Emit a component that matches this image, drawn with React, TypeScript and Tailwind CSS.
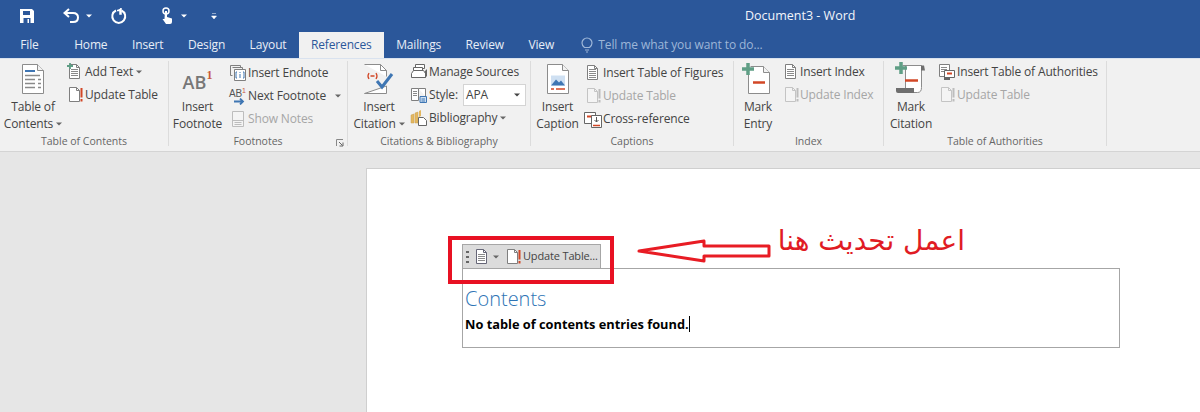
import type { ReactNode } from "react"

const GREY = "#7f7f7f"
const RED = "#d24726"
const GREEN = "#5f9e85"
const BLUE = "#3f76b3"

function Caret({ color = "#666" }: { color?: string }) {
  return (
    <svg width="6" height="4" viewBox="0 0 6 4" className="shrink-0">
      <path d="M0 0.5h6L3 3.5z" fill={color} />
    </svg>
  )
}

function Doc({ stroke = GREY, fill = "#fff", children }: { stroke?: string; fill?: string; children?: ReactNode }) {
  return (
    <>
      <path d="M3.5 1.5h7l3 3v11h-10z" fill={fill} stroke={stroke} />
      <path d="M10.5 1.5v3h3" fill="none" stroke={stroke} />
      {children}
    </>
  )
}

function Small({ children }: { children: ReactNode }) {
  return (
    <svg width="18" height="18" viewBox="0 0 18 18" className="shrink-0">
      {children}
    </svg>
  )
}

function Lines({ x = 5, y = 6, w = 7, n = 4, color = "#8a8a8a" }: { x?: number; y?: number; w?: number; n?: number; color?: string }) {
  return (
    <>
      {Array.from({ length: n }).map((_, i) => (
        <path key={i} d={`M${x} ${y + i * 2 + 0.5}h${w}`} stroke={color} />
      ))}
    </>
  )
}

const AddTextIcon = () => (
  <Small>
    <Doc><Lines /></Doc>
    <path d="M4 0v6M1 3h6" stroke={GREEN} strokeWidth="1.8" />
  </Small>
)

const UpdateIcon = ({ off = false }: { off?: boolean }) => (
  <Small>
    <Doc stroke={off ? "#c4c4c4" : GREY} fill={off ? "#f4f4f4" : "#fff"} />
    <path d="M15.5 2v9.5M15.5 13v2.5" stroke={off ? "#bdbdbd" : RED} strokeWidth="2" />
  </Small>
)

const EndnoteIcon = () => (
  <Small>
    <path d="M1.5 1.5h10v2M3.5 3.5h10v2M1.5 1.5v10h2" fill="none" stroke={GREY} />
    <path d="M5.5 5.5h11v11h-11z" fill="#fff" stroke={GREY} />
    <path d="M8 8h-1v6h1M14 8h1v6h-1" fill="none" stroke={BLUE} />
    <path d="M11 8v1M11 10v4" stroke={BLUE} />
  </Small>
)

const ShowNotesIcon = () => (
  <Small>
    <path d="M3.5 1.5h11v15h-11z" fill="#f4f4f4" stroke="#bdbdbd" />
    <path d="M3.5 10.5h11M5.5 12.5h7M5.5 14.5h7" stroke="#bdbdbd" />
  </Small>
)

const ManageIcon = () => (
  <Small>
    <path d="M5.5 1.5h9v4h-9z" fill="#fff" stroke="#666" />
    <path d="M3.5 4.5h9v4h-9z" fill="#fff" stroke="#666" />
    <path d="M1.5 10.5l2-3h10l2 3v4h-14z" fill="#fff" stroke="#666" />
    <path d="M15 8l2-2v7l-2 2z" fill="#666" />
  </Small>
)

const StyleIcon = () => (
  <Small>
    <path d="M1.5 2.5h7v12h-7zM8.5 2.5h7v8" fill="#fff" stroke={GREY} />
    <Lines x={3} y={5} w={4} n={3} />
    <path d="M10 10.5h6.500v6h-6.500z" fill="#cfe0f2" stroke={BLUE} />
    <path d="M11.500 13h3.500M11.500 15h3.500" stroke={BLUE} />
  </Small>
)

const BiblioIcon = () => (
  <Small>
    <path d="M1 6l3-1v9H1zM5 4l3-1v11H5z" fill="#e3b75f" stroke="#c9a050" strokeWidth="0.5" />
    <path d="M9 2l2-1v6l-2 1z" fill="#e3b75f" />
    <path d="M8.500 8.500h5l3 3v5h-8z" fill="#fff" stroke="#666" />
  </Small>
)

const FiguresIcon = () => (
  <Small>
    <Doc><Lines y={5} n={5} /></Doc>
  </Small>
)

const CrossRefIcon = () => (
  <Small>
    <path d="M0.500 2.500h11v11h-11z" fill="#fff" stroke="#666" />
    <path d="M3 6.500h6" stroke={RED} strokeWidth="2" />
    <path d="M7.500 5.500h10v12h-10z" fill="#fff" stroke="#666" />
    <path d="M12.500 7v5M10.500 10l2 2 2-2" fill="none" stroke="#555" />
    <path d="M9 15.500h7" stroke={RED} strokeWidth="1.500" />
  </Small>
)

const IndexIcon = ({ off = false }: { off?: boolean }) => (
  <Small>
    <Doc stroke={off ? "#c4c4c4" : GREY}><Lines color={off ? "#ccc" : "#8a8a8a"} /></Doc>
  </Small>
)

const ToaIcon = () => (
  <Small>
    <path d="M1.500 1.500h10v12h-10z" fill="#fff" stroke={GREY} />
    <Lines x={3} y={4} w={6} n={3} />
    <path d="M6.500 7.500h10v7h-10z" fill="#fff" stroke="#666" />
    <path d="M9 10.500h5" stroke={RED} strokeWidth="2" />
    <path d="M6 14h6v3H6z" fill="#666" />
  </Small>
)

function Large({ children }: { children: ReactNode }) {
  return (
    <svg width="34" height="34" viewBox="0 0 34 34">
      {children}
    </svg>
  )
}

const LargeDoc = ({ children }: { children?: ReactNode }) => (
  <>
    <path d="M6.500 2.500h15l6 6v23h-21z" fill="#fff" stroke="#8c8c8c" />
    <path d="M21.500 2.500v6h6" fill="#f2f2f2" stroke="#8c8c8c" />
    {children}
  </>
)

const TocLarge = () => (
  <Large>
    <LargeDoc>
      <path d="M9 9h10" stroke={BLUE} strokeWidth="2" />
      <path d="M9 13.500h15M9 17.500h10M9 21.500h10M9 25.500h10" stroke="#8a8a8a" strokeWidth="1.500" />
      <path d="M22 17.500h3M22 21.500h3M22 25.500h3" stroke="#8a8a8a" strokeWidth="1.500" />
    </LargeDoc>
  </Large>
)

const CitationLarge = () => (
  <Large>
    <path d="M2.500 2.500h16l6 6v6M24.500 24v7.500h-22z" fill="#fff" stroke="#8c8c8c" />
    <path d="M18.500 2.500v6h6" fill="none" stroke="#8c8c8c" />
    <path d="M7 11q-2 3 0 6M14 11q2 3 0 6" fill="none" stroke={RED} strokeWidth="1.300" />
    <path d="M8.500 14h4" stroke={RED} strokeWidth="1.500" />
    <path d="M15 19l5 6 10-13" fill="none" stroke={BLUE} strokeWidth="3" />
  </Large>
)

const CaptionLarge = () => (
  <Large>
    <LargeDoc>
      <path d="M10 13.500h14v10H10z" fill="#cfe0f2" />
      <path d="M10 23.500l5-6 3 3 2-2 4 5z" fill={BLUE} />
      <path d="M10 27h3M15 27h9" stroke={RED} strokeWidth="1.500" />
    </LargeDoc>
  </Large>
)

const EntryLarge = () => (
  <Large>
    <path d="M9.500 4.500h13l6 6v21h-21v-22" fill="#fff" stroke="#8c8c8c" />
    <path d="M22.500 4.500v6h6" fill="#f2f2f2" stroke="#8c8c8c" />
    <path d="M7 1v12M1 7h12" stroke={GREEN} strokeWidth="3.500" />
    <path d="M12 20.500h12" stroke={RED} strokeWidth="2.500" />
  </Large>
)

const CitationMarkLarge = () => (
  <Large>
    <path d="M8.500 3.500h19v22q0 5-4 5h-12v-27" fill="#fff" stroke="#8c8c8c" />
    <path d="M27 3.500h3l1 5h-4z" fill="#6e6e6e" />
    <path d="M7 0v12M1 6h12" stroke={GREEN} strokeWidth="3.500" />
    <path d="M11 18.500h13" stroke={RED} strokeWidth="2.500" />
    <path d="M2 26h18v5H4q-2 0-2-2z" fill="#6e6e6e" />
  </Large>
)

function Group({ width, label, launcher, children }: { width: string; label: string; launcher?: boolean; children: ReactNode }) {
  return (
    <div className={`${width} relative mb-[5px] mt-[2px] flex shrink-0 flex-col border-r border-[#dcdcdc]`}>
      <div className="-mt-px flex h-[76px] shrink-0">{children}</div>
      <div className="flex h-[12px] shrink-0 items-center justify-center text-[10.5px] text-[#666]">{label}</div>
      {launcher && (
        <svg width="8" height="8" viewBox="0 0 8 8" className="absolute -bottom-[1px] right-[3px]">
          <path d="M0.500 7V0.500H7" fill="none" stroke="#888" />
          <path d="M3 3l3.500 3.500M7 3.500V7H3.500" fill="none" stroke="#666" />
        </svg>
      )}
    </div>
  )
}

function LargeButton({ width, icon, lines, caret }: { width: string; icon: ReactNode; lines: [string, string]; caret?: boolean }) {
  return (
    <div className={`${width} flex shrink-0 flex-col items-center`}>
      <div className="flex h-[38px] items-center justify-center">{icon}</div>
      <div className="text-center text-[12px] leading-[17px] tracking-[-0.15px] text-[#444]">
        <div>{lines[0]}</div>
        <div className="flex items-center justify-center gap-[3px]">
          {lines[1]}
          {caret && <Caret />}
        </div>
      </div>
    </div>
  )
}

function Row({ icon, label, off, caret, gap = "gap-[1px]" }: { icon: ReactNode; label: string; off?: boolean; caret?: ReactNode; gap?: string }) {
  return (
    <div className={`flex h-[23px] items-center whitespace-nowrap text-[12px] tracking-[-0.15px] ${gap} ${off ? "text-[#a6a6a6]" : "text-[#444]"}`}>
      {icon}
      <span>{label}</span>
      {caret}
    </div>
  )
}

function Tab({ label, active }: { label: string; active?: boolean }) {
  return (
    <div className={`flex h-[26px] items-center px-[12.25px] text-[12px] tracking-[-0.15px] ${active ? "bg-[#f1f1f1] text-[#2b579a]" : "text-[#e8eef7]"}`}>
      {label}
    </div>
  )
}

export default function App() {
  return (
    <div className="flex h-[412px] w-[1200px] flex-col overflow-hidden bg-[#e6e6e6] font-['Open_Sans','Noto_Sans','DejaVu_Sans',sans-serif]">
      {/* title bar */}
      <div className="flex h-[32px] items-center bg-[#2b579a] text-white">
        <div className="ml-[19px] flex w-[726px] items-center">
          <svg width="16" height="16" viewBox="0 0 16 16">
            <path d="M1 1h12l2 2v12H1z" fill="#fff" />
            <path d="M4 3h7v4H4z" fill="#2b579a" />
            <path d="M4.500 10h7v5h-7z" fill="#2b579a" />
            <path d="M8.500 11h1.500v4H8.500z" fill="#fff" />
          </svg>
          <svg width="20" height="18" viewBox="0 0 20 18" className="ml-[27px]">
            <path d="M7 2L2.500 6 7 10" fill="none" stroke="#fff" strokeWidth="2" />
            <path d="M3 6h8q5 0 5 4.500T11 15H8" fill="none" stroke="#fff" strokeWidth="2" />
          </svg>
          <span className="ml-[4px]"><Caret color="#fff" /></span>
          <svg width="18" height="18" viewBox="0 0 18 18" className="ml-[18px]">
            <path d="M6 3.500a6.500 6.500 0 1 0 5.500 0" fill="none" stroke="#fff" strokeWidth="2" />
            <path d="M11 1v6h-1V3.500H7" fill="#fff" stroke="#fff" strokeWidth="1.500" />
          </svg>
          <svg width="18" height="18" viewBox="0 0 18 18" className="ml-[31px]">
            <circle cx="7" cy="4" r="3" fill="none" stroke="#fff" strokeWidth="1.500" />
            <path d="M6 4h2v6l5 1.500V15q0 2-2 2H7L3.500 12l2 0z" fill="#fff" />
          </svg>
          <span className="ml-[4px]"><Caret color="#fff" /></span>
          <svg width="6" height="7" viewBox="0 0 6 7" className="ml-[24px]">
            <path d="M1 0.500h4M0.500 3h5L3 6z" fill="#fff" stroke="#fff" strokeWidth="0.500" />
          </svg>
        </div>
        <div className="text-[12.5px] text-[#f2f5fa]">Document3 - Word</div>
      </div>

      {/* tabs */}
      <div className="flex h-[26px] items-end bg-[#2b579a] pl-[8px]">
        <Tab label="File" />
        <div className="w-[11px]" />
        <Tab label="Home" />
        <Tab label="Insert" />
        <Tab label="Design" />
        <Tab label="Layout" />
        <Tab label="References" active />
        <Tab label="Mailings" />
        <Tab label="Review" />
        <Tab label="View" />
        <div className="ml-[14px] flex h-[26px] items-center gap-[4px] text-[12px] tracking-[-0.1px] text-[#9db6d8]">
          <svg width="14" height="16" viewBox="0 0 14 16" fill="none" stroke="#9db6d8" strokeWidth="1.200">
            <path d="M4.500 10.500Q2 8.500 2 6a5 5 0 0 1 10 0q0 2.500-2.500 4.500z" />
            <path d="M5 13h4M6 15h2" />
          </svg>
          Tell me what you want to do...
        </div>
      </div>

      {/* ribbon */}
      <div className="flex h-[93px] border-t border-[#d9e2ef] bg-[#f1f1f1] shadow-[0_1px_0_#d4d4d4]">
        <Group width="w-[169px]" label="Table of Contents">
          <LargeButton width="w-[66px]" icon={<TocLarge />} lines={["Table of", "Contents"]} caret />
          <div>
            <Row icon={<AddTextIcon />} label="Add Text" caret={<span className="ml-[2px]"><Caret /></span>} />
            <Row icon={<UpdateIcon />} label="Update Table" />
          </div>
        </Group>
        <Group width="w-[179px]" label="Footnotes" launcher>
          <LargeButton
            width="w-[57px] mr-[3px]"
            icon={
              <div className="flex items-start pt-[5px] text-[#777]">
                <span className="text-[18px] font-semibold leading-[24px]">AB</span>
                <span className="-mt-[4px] font-['Liberation_Serif'] text-[12px] font-bold text-[#c8593c]">1</span>
              </div>
            }
            lines={["Insert", "Footnote"]}
          />
          <div className="pt-[1px]">
            <Row icon={<EndnoteIcon />} label="Insert Endnote" />
            <Row
              icon={
                <span className="relative h-[18px] w-[18px] shrink-0 font-['Liberation_Sans'] text-[10px] leading-[14px] text-[#555]">
                  AB<span className="absolute -top-[3px] left-[13px] text-[7px] text-[#c8593c]">1</span>
                  <svg width="12" height="7" viewBox="0 0 12 7" className="absolute left-[5px] top-[11px]">
                    <path d="M0 3.500h8M6 0.500l3 3-3 3" fill="none" stroke={BLUE} strokeWidth="1.800" />
                  </svg>
                </span>
              }
              label="Next Footnote"
              caret={<span className="ml-[8px]"><Caret /></span>}
            />
            <Row icon={<ShowNotesIcon />} label="Show Notes" off />
          </div>
        </Group>
        <Group width="w-[183px]" label="Citations & Bibliography">
          <LargeButton width="w-[62px]" icon={<CitationLarge />} lines={["Insert", "Citation"]} caret />
          <div>
            <Row icon={<ManageIcon />} label="Manage Sources" />
            <div className="flex h-[23px] items-center gap-[1px] text-[12px] tracking-[-0.15px] text-[#444]">
              <StyleIcon />
              <span className="w-[33px]">Style:</span>
              <div className="flex h-[22px] w-[63px] items-center justify-between border border-[#d4d4d4] bg-white px-[2px] pr-[5px]">
                APA
                <Caret color="#444" />
              </div>
            </div>
            <Row icon={<BiblioIcon />} label="Bibliography" caret={<span className="ml-[2px]"><Caret /></span>} />
          </div>
        </Group>
        <Group width="w-[203px]" label="Captions">
          <LargeButton width="w-[53px]" icon={<CaptionLarge />} lines={["Insert", "Caption"]} />
          <div className="pt-[1px]">
            <Row icon={<FiguresIcon />} label="Insert Table of Figures" />
            <Row icon={<UpdateIcon off />} label="Update Table" off />
            <Row icon={<CrossRefIcon />} label="Cross-reference" />
          </div>
        </Group>
        <Group width="w-[150px]" label="Index">
          <LargeButton width="w-[48px]" icon={<EntryLarge />} lines={["Mark", "Entry"]} />
          <div>
            <Row icon={<IndexIcon />} label="Insert Index" gap="gap-0" />
            <Row icon={<UpdateIcon off />} label="Update Index" off gap="gap-0" />
          </div>
        </Group>
        <Group width="w-[223px]" label="Table of Authorities">
          <LargeButton width="w-[54px]" icon={<CitationMarkLarge />} lines={["Mark", "Citation"]} />
          <div>
            <Row icon={<ToaIcon />} label="Insert Table of Authorities" />
            <Row icon={<UpdateIcon off />} label="Update Table" off />
          </div>
        </Group>
      </div>

      {/* document */}
      <div className="flex flex-1 pl-[366px] pt-[17px]">
        <div className="relative flex-1 border-l border-t border-[#cfcfcf] bg-white pl-[95px] pr-[80px] pt-[75px]">
          <div className="flex h-[24px] w-[139px] items-center whitespace-nowrap border border-b-0 border-[#a6a6a6] bg-[#dcdcdc] pl-[3px] text-[11px] tracking-[-0.15px] text-[#444]">
            <svg width="3" height="14" viewBox="0 0 3 14" className="shrink-0">
              <path d="M0 1h3v2H0zM0 6h3v2H0zM0 11h3v2H0z" fill="#666" />
            </svg>
            <span className="ml-[4px]"><Small><Doc stroke="#667"><Lines /></Doc></Small></span>
            <span className="ml-[2px]"><Caret /></span>
            <span className="ml-[5px]"><UpdateIcon /></span>
            <span className="ml-[1px]">Update Table...</span>
          </div>
          <div className="h-[80px] border border-[#a6a6a6] pl-[2px] pt-[16px]">
            <div className="text-[20px] font-light leading-[28px] text-[#2e74b5]">Contents</div>
            <div className="mt-[2px] flex items-center text-[12.8px] font-bold leading-[18px] text-black">
              No table of contents entries found.
              <span className="h-[16px] w-px bg-black" />
            </div>
          </div>

          {/* annotations */}
          <div className="absolute left-[81px] top-[67px] h-[48px] w-[166px] border-[4px] border-[#e81123]" />
          <svg width="136" height="26" viewBox="0 0 136 26" className="absolute left-[270px] top-[70px]">
            <path d="M2 12L67 2v5h65v10H67v5z" fill="#fff" stroke="#e81c24" strokeWidth="3" strokeLinejoin="round" />
          </svg>
          <div dir="rtl" className="absolute left-[406px] top-[54px] w-[192px] whitespace-nowrap text-right font-['DejaVu_Sans'] text-[28px] leading-[36px] text-[#e01b24]">
            اعمل تحديث هنا
          </div>
        </div>
      </div>
    </div>
  )
}
